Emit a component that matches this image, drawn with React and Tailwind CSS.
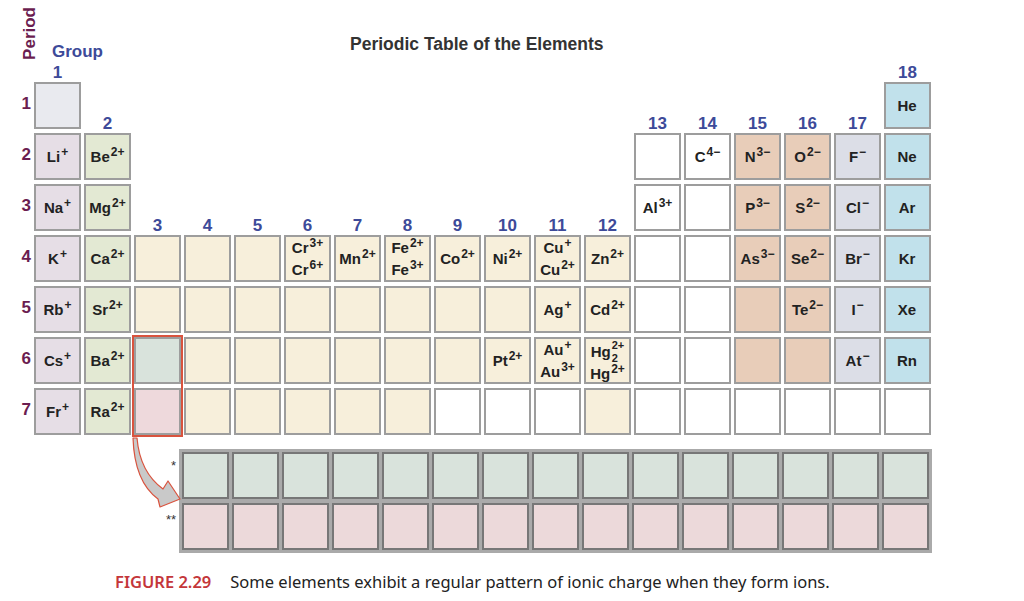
import React from 'react';

const COLORS = {
    h: 'bg-[#e9eaef]',
    a: 'bg-[#e6dee6]',
    e: 'bg-[#e3e9d3]',
    t: 'bg-[#f7efdb]',
    w: 'bg-white',
    p: 'bg-[#e8cdb9]',
    x: 'bg-[#dcdee7]',
    n: 'bg-[#c1e1eb]',
    g: 'bg-[#d9e3dc]',
    k: 'bg-[#eed9dc]',
};

const E10 = ['', '', '', '', '', '', '', '', '', ''];
const T = 't:';

// one entry per group column; '#n' = group label, '' = nothing, 'c:text' = a cell
const ROWS = [
    ['h:', '#2', ...E10, '#13', '#14', '#15', '#16', '#17', 'n:He'],
    ['a:Li|+', 'e:Be|2+', ...E10, 'w:', 'w:C|4−', 'p:N|3−', 'p:O|2−', 'x:F|−', 'n:Ne'],
    ['a:Na|+', 'e:Mg|2+', '#3', '#4', '#5', '#6', '#7', '#8', '#9', '#10', '#11', '#12', 'w:Al|3+', 'w:', 'p:P|3−', 'p:S|2−', 'x:Cl|−', 'n:Ar'],
    ['a:K|+', 'e:Ca|2+', T, T, T, 't:Cr|3+;Cr|6+', 't:Mn|2+', 't:Fe|2+;Fe|3+', 't:Co|2+', 't:Ni|2+', 't:Cu|+;Cu|2+', 't:Zn|2+', 'w:', 'w:', 'p:As|3−', 'p:Se|2−', 'x:Br|−', 'n:Kr'],
    ['a:Rb|+', 'e:Sr|2+', T, T, T, T, T, T, T, T, 't:Ag|+', 't:Cd|2+', 'w:', 'w:', 'p:', 'p:Te|2−', 'x:I|−', 'n:Xe'],
    ['a:Cs|+', 'e:Ba|2+', 'RED', T, T, T, T, T, T, 't:Pt|2+', 't:Au|+;Au|3+', 'HG', 'w:', 'w:', 'p:', 'p:', 'x:At|−', 'n:Rn'],
    ['a:Fr|+', 'e:Ra|2+', T, T, T, T, T, 'w:', 'w:', 'w:', T, 'w:', 'w:', 'w:', 'w:', 'w:', 'w:'],
];

const Ion = ({ s, className = '' }) => {
    const [sym, ch] = s.split('|');
    return (
        <span className={`whitespace-nowrap ${className}`}>
            {sym}<sup className="text-[12px] -top-[6px] ml-[1px]">{ch}</sup>
        </span>
    );
};

const Cell = ({ color, children }) => (
    <div className={`h-[47px] w-[47px] border-2 border-[#9d9d9d] flex flex-col items-center justify-center text-[15px] font-bold text-[#222] leading-[22px] ${COLORS[color]}`}>
        {children}
    </div>
);

const GroupLabel = ({ n }) => (
    <div className="flex items-end justify-center">
        <span className="text-[17px] font-bold text-[#3d4a99] leading-[12px] translate-y-[1px]">{n}</span>
    </div>
);

const renderEntry = (entry, key) => {
    if (entry === '') return <div key={key} />;
    if (entry.startsWith('#')) return <GroupLabel key={key} n={entry.slice(1)} />;
    if (entry === 'RED') {
        return (
            <div key={key} className="row-span-2 flex flex-col gap-[4px] outline-2 outline-[#d9533e]">
                <Cell color="g" />
                <Cell color="k" />
            </div>
        );
    }
    if (entry === 'HG') {
        return (
            <Cell key={key} color="t">
                <span className="whitespace-nowrap flex items-center h-[26px] leading-[18px]">
                    Hg
                    <span className="inline-flex flex-col items-start text-[11px] leading-[13px] ml-[1px]">
                        <span>2+</span>
                        <span>2</span>
                    </span>
                </span>
                <Ion s="Hg|2+" className="leading-[17px]" />
            </Cell>
        );
    }
    const [color, text] = entry.split(':');
    return (
        <Cell key={key} color={color}>
            {text ? text.split(';').map((line, i) => <Ion key={i} s={line} />) : null}
        </Cell>
    );
};

export default function App() {
    return (
        <div className="relative w-[1024px] h-[601px] overflow-hidden bg-white font-['Liberation_Sans',Arial,sans-serif]">
            <div className="grid grid-cols-[20px_repeat(18,47px)] grid-rows-[78px_repeat(7,47px)] gap-x-[3px] gap-y-[4px] pl-[11px]">
                {/* header row */}
                <div className="self-start mt-[7px] ml-[10px] w-fit text-[17px] font-bold text-[#6b1d50] leading-[17px] [writing-mode:vertical-rl] rotate-180">
                    Period
                </div>
                <div className="flex flex-col justify-end whitespace-nowrap text-[17px] font-bold text-[#3d4a99]">
                    <span className="ml-[18px] leading-[20px] mb-[4px]">Group</span>
                    <span className="self-center leading-[12px] translate-y-[1px]">1</span>
                </div>
                <div className="col-span-16 pt-[34px] pl-[266px] text-[17.5px] font-bold text-[#333] leading-[20px] whitespace-nowrap">
                    Periodic Table of the Elements
                </div>
                <GroupLabel n="18" />

                {ROWS.map((row, r) => (
                    <React.Fragment key={r}>
                        <div className="flex items-center justify-end">
                            <span className="relative -top-[2px] text-[17px] font-bold text-[#6b1d50] leading-[17px]">{r + 1}</span>
                        </div>
                        {row.map((entry, c) => renderEntry(entry, `${r}-${c}`))}
                    </React.Fragment>
                ))}
            </div>

            {/* lanthanides / actinides */}
            <div className="flex mt-[14px] ml-[150px]">
                <div className="w-[29px] flex flex-col pt-[3px] gap-[4px] text-right text-[13px] leading-[13px] text-[#333] pr-[3px]">
                    <div className="h-[47px] pt-[7px]">*</div>
                    <div className="h-[47px] pt-[10px]">**</div>
                </div>
                <div className="bg-[#aaaaaa] p-[3px] flex flex-col gap-[4px]">
                    {['bg-[#d9e3dc]', 'bg-[#ecd9da]'].map((bg, i) => (
                        <div key={i} className="flex gap-[3px]">
                            {Array.from({ length: 15 }).map((_, j) => (
                                <div key={j} className={`h-[47px] w-[47px] border-2 border-[#777] ${bg}`} />
                            ))}
                        </div>
                    ))}
                </div>
            </div>

            <p className="mt-[19px] ml-[115px] text-[16.5px] leading-[20px] font-['Noto_Sans',sans-serif] text-[#222] whitespace-nowrap">
                <span className="font-semibold text-[#c4363a]">FIGURE 2.29</span>
                <span className="ml-[19px]">Some elements exhibit a regular pattern of ionic charge when they form ions.</span>
            </p>

            <svg className="absolute left-[125px] top-[435px]" width="60" height="80" viewBox="125 435 60 80">
                <path
                    d="M133,438 C134,468 143,488 158,499 L160,507 L180,499 L168,481 L163,489 C148,478 139,462 137,438 Z"
                    fill="#c9c9c9"
                    stroke="#d9533e"
                    strokeWidth="1.2"
                    strokeLinejoin="round"
                />
            </svg>
        </div>
    );
}
